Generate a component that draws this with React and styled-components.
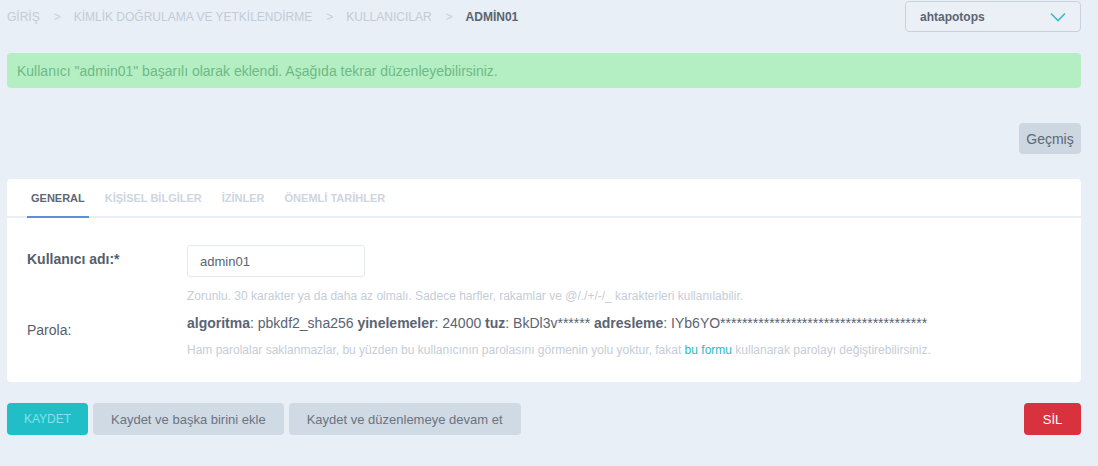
import styled, { createGlobalStyle } from 'styled-components';

const GlobalStyle = createGlobalStyle`
  html, body {
    margin: 0;
    padding: 0;
    background: #e9eff6;
    font-family: 'Liberation Sans', Arial, sans-serif;
  }
  * { box-sizing: border-box; }
`;

function App() {
  return (
    <Page>
      <GlobalStyle />
      <TopBar>
        <Breadcrumbs>
          <Crumb>GİRİŞ</Crumb>
          <Sep>&gt;</Sep>
          <Crumb>KİMLİK DOĞRULAMA VE YETKİLENDİRME</Crumb>
          <Sep>&gt;</Sep>
          <Crumb>KULLANICILAR</Crumb>
          <Sep>&gt;</Sep>
          <Crumb $active>ADMİN01</Crumb>
        </Breadcrumbs>
        <Select>
          <span>ahtapotops</span>
          <svg width="16" height="10" viewBox="0 0 16 10" fill="none">
            <path d="M1 1.5 L8 8.5 L15 1.5" stroke="#3dbac2" strokeWidth="1.6" />
          </svg>
        </Select>
      </TopBar>

      <Alert>Kullanıcı "admin01" başarılı olarak eklendi. Aşağıda tekrar düzenleyebilirsiniz.</Alert>

      <Tools>
        <HistoryButton>Geçmiş</HistoryButton>
      </Tools>

      <Card>
        <Tabs>
          <Tab $active>GENERAL</Tab>
          <Tab>KİŞİSEL BİLGİLER</Tab>
          <Tab>İZİNLER</Tab>
          <Tab>ÖNEMLİ TARİHLER</Tab>
        </Tabs>
        <Fields>
          <Row>
            <Label $required>Kullanıcı adı:*</Label>
            <Field>
              <Input defaultValue="admin01" />
              <Help>Zorunlu. 30 karakter ya da daha az olmalı. Sadece harfler, rakamlar ve @/./+/-/_ karakterleri kullanılabilir.</Help>
            </Field>
          </Row>
          <Row>
            <Label>Parola:</Label>
            <Field>
              <HashInfo>
                <b>algoritma</b>: pbkdf2_sha256 <b>yinelemeler</b>: 24000 <b>tuz</b>: BkDl3v****** <b>adresleme</b>: IYb6YO**************************************
              </HashInfo>
              <Help>
                Ham parolalar saklanmazlar, bu yüzden bu kullanıcının parolasını görmenin yolu yoktur, fakat <Link>bu formu</Link> kullanarak parolayı değiştirebilirsiniz.
              </Help>
            </Field>
          </Row>
        </Fields>
      </Card>

      <Actions>
        <ButtonGroup>
          <SaveButton>KAYDET</SaveButton>
          <Button>Kaydet ve başka birini ekle</Button>
          <Button>Kaydet ve düzenlemeye devam et</Button>
        </ButtonGroup>
        <DeleteButton>SİL</DeleteButton>
      </Actions>
    </Page>
  );
}
export default App;

const Page = styled.div`
  width: 1098px;
  height: 466px;
  padding: 1px 17px 0 7px;
  display: flex;
  flex-direction: column;
`;

const TopBar = styled.div`
  display: flex;
  justify-content: space-between;
  align-items: flex-start;
  height: 31px;
`;

const Breadcrumbs = styled.nav`
  display: flex;
  align-items: center;
  height: 31px;
  font-size: 12px;
  color: #c2ccd8;
`;

const Crumb = styled.span`
  font-weight: ${p => (p.$active ? 700 : 400)};
  color: ${p => (p.$active ? '#5a6472' : '#c2ccd8')};
  font-size: 12px;
`;

const Sep = styled.span`
  margin: 0 13px 0 14px;
  font-size: 12px;
  color: #c6d0db;
`;

const Select = styled.div`
  width: 176px;
  height: 31px;
  border: 1px solid #c8d2dd;
  border-radius: 4px;
  background: #eaf0f6;
  display: flex;
  align-items: center;
  justify-content: space-between;
  padding: 0 14px 0 14px;
  font-size: 12px;
  font-weight: 700;
  color: #5a6472;
`;

const Alert = styled.div`
  margin-top: 21px;
  height: 35px;
  border-radius: 4px;
  background: #b4efc4;
  color: #6fb985;
  font-size: 14px;
  display: flex;
  align-items: center;
  padding-left: 10px;
`;

const Tools = styled.div`
  display: flex;
  justify-content: flex-end;
  margin-top: 35px;
`;

const HistoryButton = styled.button`
  height: 31px;
  width: 62px;
  padding: 0;
  border: none;
  border-radius: 4px;
  background: #ccd7e2;
  color: #5e6774;
  font-family: 'Liberation Sans', Arial, sans-serif;
  font-size: 14px;
`;

const Card = styled.section`
  margin-top: 25px;
  background: #ffffff;
  border-radius: 4px;
  height: 203px;
`;

const Tabs = styled.div`
  display: flex;
  height: 39px;
  border-bottom: 2px solid #eaeff5;
  padding-left: 20px;
`;

const Tab = styled.div`
  padding: 0 4px;
  margin-right: 12px;
  display: flex;
  align-items: center;
  font-size: 11px;
  font-weight: 700;
  color: ${p => (p.$active ? '#5d6776' : '#cdd5df')};
  border-bottom: 2px solid ${p => (p.$active ? '#5b8fd8' : 'transparent')};
  margin-bottom: -2px;
  padding-top: 1px;
`;

const Fields = styled.div`
  padding: 27px 20px 0 20px;
  display: flex;
  flex-direction: column;
  gap: 11px;
`;

const Row = styled.div`
  display: flex;
`;

const Label = styled.div`
  width: 160px;
  flex-shrink: 0;
  font-size: 14px;
  color: #555e6b;
  font-weight: ${p => (p.$required ? 700 : 400)};
  padding-top: ${p => (p.$required ? '6px' : '8px')};
`;

const Field = styled.div`
  display: flex;
  flex-direction: column;
`;

const Input = styled.input`
  width: 178px;
  height: 32px;
  border: 1px solid #e4e9ef;
  border-radius: 3px;
  padding: 0 12px;
  font-family: 'Liberation Sans', Arial, sans-serif;
  font-size: 13px;
  color: #5a6472;
  outline: none;
`;

const Help = styled.div`
  margin-top: 12px;
  font-size: 12px;
  color: #c5cdd7;
`;

const HashInfo = styled.div`
  padding-top: 1px;
  font-size: 14px;
  color: #5a6472;
  b { font-weight: 700; color: #5a6472; }
`;

const Link = styled.span`
  color: #1fbcc4;
`;

const Actions = styled.div`
  margin-top: 21px;
  display: flex;
  justify-content: space-between;
`;

const ButtonGroup = styled.div`
  display: flex;
  gap: 5px;
`;

const Button = styled.button`
  height: 32px;
  padding: 0 18px;
  border: none;
  border-radius: 4px;
  background: #d0dae5;
  color: #6a7380;
  font-family: 'Liberation Sans', Arial, sans-serif;
  font-size: 13px;
`;

const SaveButton = styled(Button)`
  width: 81px;
  padding: 0;
  background: #20bfc7;
  color: #86e2e6;
  font-size: 12px;
`;

const DeleteButton = styled(Button)`
  width: 57px;
  padding: 0;
  background: #d9323f;
  color: #ffffff;
  font-size: 13px;
`;
